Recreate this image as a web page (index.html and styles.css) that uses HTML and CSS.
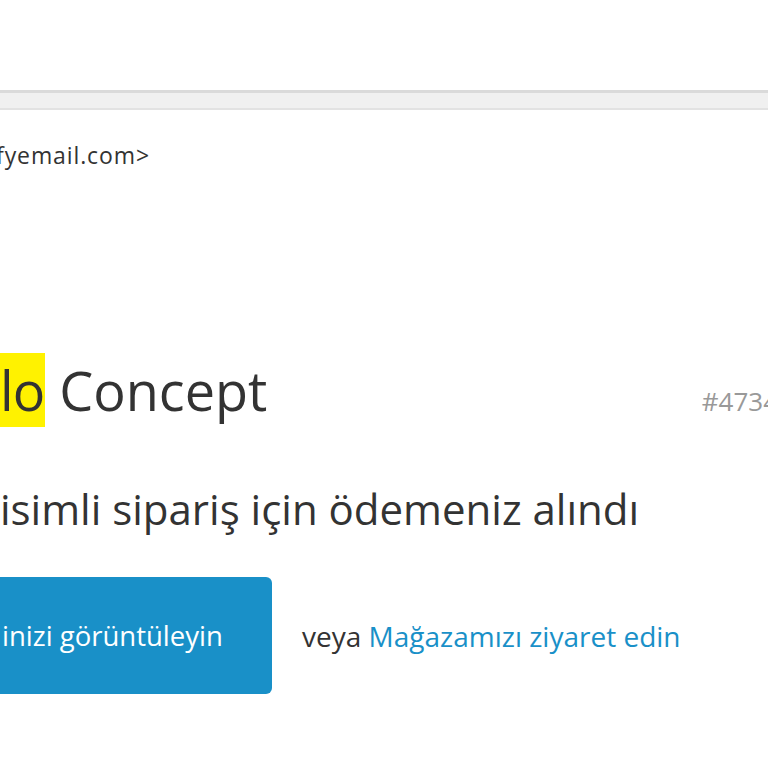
FILE: index.html
```html
<!DOCTYPE html>
<html lang="tr">
<head>
<meta charset="utf-8">
<link rel="stylesheet" href="styles.css">
</head>
<body>
<div class="page">
  <div class="top"></div>
  <div class="band"></div>
  <div class="mail">
    <div class="from">fyemail.com&gt;</div>
    <div class="title-row">
      <h1 class="shop"><span class="hl">lo</span> Concept</h1>
      <span class="order">#4734</span>
    </div>
    <p class="lead">isimli sipariş için ödemeniz alındı</p>
    <div class="actions">
      <a class="btn">inizi görüntüleyin</a>
      <span class="or">veya <a class="link">Mağazamızı ziyaret edin</a></span>
    </div>
  </div>
</div>
</body>
</html>
```
FILE: styles.css
```css
html, body {
  margin: 0;
  padding: 0;
  background: #fff;
}
body {
  width: 768px;
  height: 768px;
  overflow: hidden;
  font-family: "Open Sans", "Noto Sans", sans-serif;
  color: #333;
}
.page {
  width: 768px;
}
.top {
  height: 90px;
  background: #fff;
}
.band {
  height: 15px;
  background: #f0f0f0;
  border-top: 3px solid #dadada;
  border-bottom: 2px solid #e2e2e2;
}
.mail {
  white-space: nowrap;
}
.from {
  margin-top: 32px;
  margin-left: -4px;
  font-size: 23px;
  letter-spacing: 0.9px;
  line-height: 26px;
  color: #333;
}
.title-row {
  margin-top: 186px;
  display: flex;
  justify-content: space-between;
  align-items: baseline;
}
.shop {
  margin: 0;
  font-size: 54px;
  font-weight: 400;
  line-height: 73px;
  color: #333;
}
.hl {
  background: #fff200;
  padding: 0 1px 0 0;
  letter-spacing: -1px;
}
.order {
  font-size: 26px;
  color: #999;
  margin-right: -10px;
}
.lead {
  margin: 58px 0 0 0;
  font-size: 42px;
  line-height: 48px;
  color: #333;
}
.actions {
  margin-top: 44px;
  display: flex;
  align-items: center;
}
.btn {
  display: flex;
  align-items: center;
  width: 272px;
  height: 117px;
  box-sizing: border-box;
  padding-left: 2px;
  background: #1990c8;
  color: #fff;
  border-radius: 0 6px 6px 0;
  font-size: 27.5px;
  text-decoration: none;
}
.or {
  margin-left: 30px;
  font-size: 28px;
  color: #333;
}
.link {
  color: #1990c8;
  text-decoration: none;
}
```
